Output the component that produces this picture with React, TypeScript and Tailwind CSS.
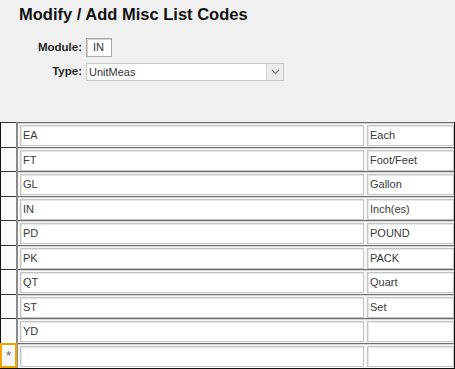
import React from "react";

const rows = [
  { code: "EA", desc: "Each" },
  { code: "FT", desc: "Foot/Feet" },
  { code: "GL", desc: "Gallon" },
  { code: "IN", desc: "Inch(es)" },
  { code: "PD", desc: "POUND" },
  { code: "PK", desc: "PACK" },
  { code: "QT", desc: "Quart" },
  { code: "ST", desc: "Set" },
  { code: "YD", desc: "" },
];

const heights = ["h-[25px]", "h-[24px]", "h-[25px]", "h-[24px]", "h-[25px]", "h-[24px]", "h-[25px]", "h-[24px]", "h-[25px]"];

const Cell = ({ text, className }: { text: string; className: string }) => (
  <div className={`h-[21px] border border-[#c4c4c4] bg-white shadow-[inset_1px_1px_0_#e6e6e6] pl-[2px] text-[11px] leading-[19px] text-[#3a3a3a] ${className}`}>
    {text}
  </div>
);

export default function App() {
  return (
    <div className="w-[455px] h-[369px] bg-[#f0f0f0] overflow-hidden flex flex-col" style={{ fontFamily: '"Liberation Sans", Arial, sans-serif' }}>
      <div className="h-[122px] shrink-0">
        <h1 className="pl-[19px] pt-[5px] text-[16.5px] font-bold leading-[18px] text-[#111]">Modify / Add Misc List Codes</h1>
        <div className="mt-[15px] flex items-center">
          <span className="w-[86px] text-right pr-[4px] text-[11.5px] font-bold text-[#222]">Module:</span>
          <div className="w-[26px] h-[19px] bg-white border border-[#a8a8a8] shadow-[inset_1px_1px_0_#d0d0d0] text-[11px] leading-[17px] pl-[6px] text-[#333]">IN</div>
        </div>
        <div className="mt-[6px] flex items-center">
          <span className="w-[86px] text-right pr-[4px] text-[11.5px] font-bold text-[#222]">Type:</span>
          <div className="w-[198px] h-[18px] bg-white border border-[#c8c8c8] flex">
            <span className="flex-1 text-[11px] leading-[16px] pl-[2px] text-[#333]">UnitMeas</span>
            <div className="w-[17px] h-full bg-[#ececec] border-l border-[#d4d4d4] flex items-center justify-center">
              <svg width="9" height="6" viewBox="0 0 9 6"><path d="M1 1 L4.5 4.5 L8 1" fill="none" stroke="#7a7a7a" strokeWidth="1.2" /></svg>
            </div>
          </div>
        </div>
      </div>
      <div className="flex-1 bg-[#f7f7f7] border-l border-r border-b border-[#111] flex flex-col">
        {rows.map((r, i) => (
          <div key={r.code} className={`${heights[i]} flex shrink-0`}>
            <div className="w-[15px] bg-[#fafafa] border-t border-[#333]" />
            <div className="w-[2px] bg-[#8a8a8a]" />
            <div className="flex-1 border-t border-[#6e6e6e] flex flex-col">
              <div className="h-[1px] bg-[#d8d8d8]" />
              <div className="flex gap-[3px] pl-[2px] pt-[1px]">
                <Cell text={r.code} className="w-[344px] shrink-0" />
                <Cell text={r.desc} className="flex-1" />
              </div>
            </div>
          </div>
        ))}
        <div className="flex-1 flex">
          <div className="w-[17px] -ml-[1px] border-[2px] border-[#f5a500] bg-[#fafafa] flex items-center justify-center text-[13px] text-[#666] leading-none">*</div>
          <div className="w-[1px] bg-[#8a8a8a]" />
          <div className="flex-1 border-t border-[#6e6e6e] flex flex-col">
            <div className="h-[1px] bg-[#d8d8d8]" />
            <div className="flex gap-[3px] pl-[2px] pt-[1px]">
              <Cell text="" className="w-[344px] shrink-0" />
              <Cell text="" className="flex-1" />
            </div>
          </div>
        </div>
      </div>
    </div>
  );
}
